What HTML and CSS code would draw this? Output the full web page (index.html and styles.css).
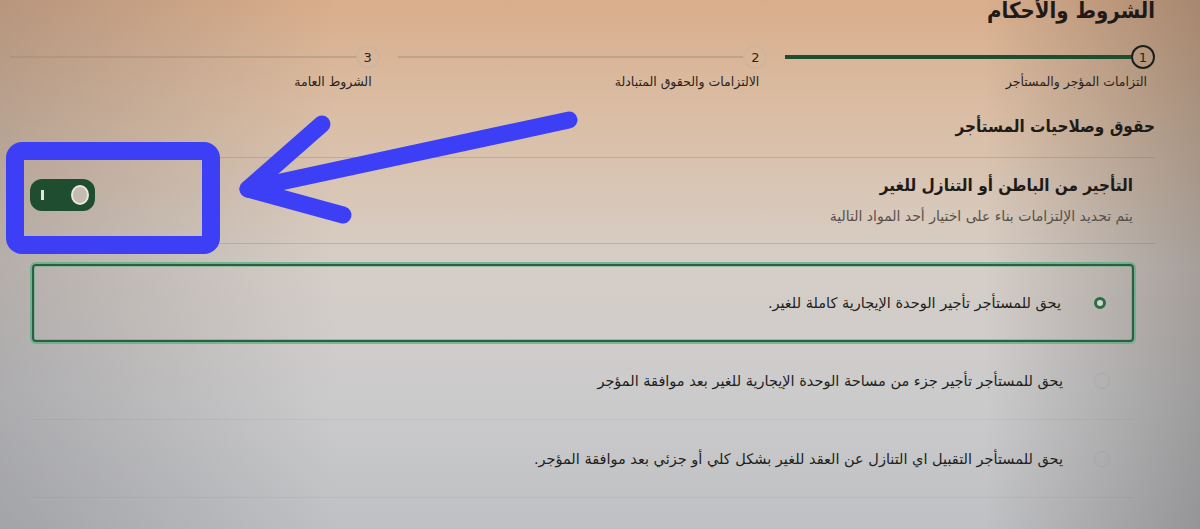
FILE: index.html
```html
<!DOCTYPE html>
<html lang="ar" dir="rtl">
<head>
    <meta charset="UTF-8">
    <meta name="viewport" content="width=device-width, initial-scale=1.0">
    <title>الشروط والأحكام</title>
    <link rel="stylesheet" href="styles.css">
</head>
<body>
    <main class="page">
        <h1 class="page-title">الشروط والأحكام</h1>

        <ol class="stepper">
            <li class="step done">
                <div class="step-track"><span class="step-num">1</span><span class="step-line"></span></div>
                <span class="step-label">التزامات المؤجر والمستأجر</span>
            </li>
            <li class="step">
                <div class="step-track"><span class="step-num">2</span><span class="step-line"></span></div>
                <span class="step-label">الالتزامات والحقوق المتبادلة</span>
            </li>
            <li class="step">
                <div class="step-track"><span class="step-num">3</span><span class="step-line"></span></div>
                <span class="step-label">الشروط العامة</span>
            </li>
        </ol>

        <h2 class="section-title">حقوق وصلاحيات المستأجر</h2>

        <section class="card">
            <div class="card-head">
                <div class="card-text">
                    <h3>التأجير من الباطن أو التنازل للغير</h3>
                    <p>يتم تحديد الإلتزامات بناء على اختيار أحد المواد التالية</p>
                </div>
                <span class="toggle"><i class="toggle-mark"></i><i class="toggle-knob"></i></span>
            </div>

            <div class="options">
                <label class="option selected">
                    <span class="radio"></span>
                    <span class="option-text">يحق للمستأجر تأجير الوحدة الإيجارية كاملة للغير.</span>
                </label>
                <label class="option">
                    <span class="radio"></span>
                    <span class="option-text">يحق للمستأجر تأجير جزء من مساحة الوحدة الإيجارية للغير بعد موافقة المؤجر</span>
                </label>
                <label class="option">
                    <span class="radio"></span>
                    <span class="option-text">يحق للمستأجر التقبيل اي التنازل عن العقد للغير بشكل كلي أو جزئي بعد موافقة المؤجر.</span>
                </label>
            </div>
        </section>
    </main>

    <!-- hand-drawn annotation on top of the screenshot -->
    <svg class="annotation" width="1200" height="529" viewBox="0 0 1200 529">
        <rect x="15" y="151" width="196" height="94" rx="7" fill="none" stroke="#3d3ff6" stroke-width="18"/>
        <g stroke="#3d3ff6" stroke-width="17" stroke-linecap="round" stroke-linejoin="round" fill="none">
            <line x1="569" y1="120" x2="248" y2="189"/>
            <polyline points="322,124 248,189 343,215"/>
        </g>
    </svg>
</body>
</html>
```

FILE: styles.css
```css
:root {
    --text: #1f1b18;
    --muted: #57504a;
    --green: #1f4d2f;
    --line: rgba(120, 110, 100, 0.28);
}

html, body {
    height: 100%;
}

body {
    margin: 0;
    overflow: hidden;
    font-family: "DejaVu Sans", "Noto Sans", sans-serif;
    color: var(--text);
    background:
        linear-gradient(to right, rgba(50, 50, 60, 0.2) 0%, rgba(50, 50, 60, 0) 28%, rgba(40, 35, 35, 0) 82%, rgba(40, 35, 35, 0.28) 100%),
        linear-gradient(to bottom, #d9ae8c 0%, #dabfa7 24%, #d6cec7 50%, #cbcbcc 76%, #bfc0c3 100%);
}

.page {
    padding: 0 45px 0 10px;
}

.page-title,
.section-title,
.card-text h3 {
    font-family: "DejaVu Sans Condensed", "DejaVu Sans", sans-serif;
    font-weight: bold;
}

.page-title {
    margin: -5px 0 0;
    font-size: 22px;
    line-height: 32px;
}

/* stepper */
.stepper {
    display: flex;
    list-style: none;
    margin: 18px 0 0;
    padding: 0;
}

.step {
    flex: 1;
    padding-left: 18px;
}

.step:last-child {
    padding-left: 0;
}

.step-track {
    display: flex;
    align-items: center;
    height: 24px;
}

.step-num {
    width: 20px;
    height: 20px;
    border: 2px solid rgba(200, 180, 160, 0.6);
    border-radius: 50%;
    display: flex;
    align-items: center;
    justify-content: center;
    font-size: 13px;
    color: #2b2521;
}

.step-line {
    flex: 1;
    height: 2px;
    background-color: rgba(160, 140, 120, 0.45);
}

.step.done .step-num {
    border-color: #1d2018;
}

.step.done .step-line {
    height: 4px;
    background-color: var(--green);
}

.step-label {
    display: block;
    margin-top: 4px;
    padding-right: 8px;
    font-size: 12.5px;
    line-height: 18px;
    color: #2a2420;
}

.section-title {
    margin: 22px 0 0;
    font-size: 17px;
    line-height: 26px;
}

/* card */
.card {
    margin-top: 18px;
    border-top: 1px solid var(--line);
}

.card-head {
    display: flex;
    justify-content: space-between;
    align-items: flex-start;
    padding: 13px 22px 16px 20px;
    border-bottom: 1px solid var(--line);
}

.card-text h3 {
    margin: 0;
    font-size: 17px;
    line-height: 28px;
}

.card-text p {
    margin: 6px 0 0;
    font-size: 14px;
    line-height: 22px;
    color: var(--muted);
}

.toggle {
    margin-top: 8px;
    width: 65px;
    height: 32px;
    border-radius: 12px;
    background-color: var(--green);
    display: flex;
    align-items: center;
    justify-content: space-between;
    padding: 0 6px 0 11px;
    box-sizing: border-box;
    direction: ltr;
}

.toggle-mark {
    width: 3px;
    height: 10px;
    background-color: #e6e3dc;
}

.toggle-knob {
    width: 18px;
    height: 20px;
    border-radius: 50%;
    background-color: #c4bcb0;
    border: 2px solid #ebe7e0;
    box-sizing: border-box;
}

/* options */
.options {
    padding: 20px 21px 0 22px;
}

.option {
    display: flex;
    align-items: center;
    gap: 31px;
    height: 78px;
    padding-right: 24px;
    box-sizing: border-box;
    font-size: 14.5px;
    color: #221e1b;
}

.option + .option {
    border-bottom: 1px solid rgba(120, 120, 120, 0.12);
}

.option.selected {
    border: 2px solid #2a5f40;
    border-radius: 4px;
    box-shadow: 0 0 0 2px rgba(92, 174, 134, 0.75), inset 0 0 0 1px rgba(92, 174, 134, 0.5);
}

.radio {
    width: 16px;
    height: 16px;
    border-radius: 50%;
    border: 1px solid rgba(150, 150, 150, 0.35);
    box-sizing: border-box;
    flex-shrink: 0;
}

.option.selected .radio {
    width: 12px;
    height: 12px;
    margin: 0 2px;
    border: 3px solid #2c6b45;
    background-color: #cfd8cc;
}

.annotation {
    position: fixed;
    top: 0;
    left: 0;
    pointer-events: none;
}
```
